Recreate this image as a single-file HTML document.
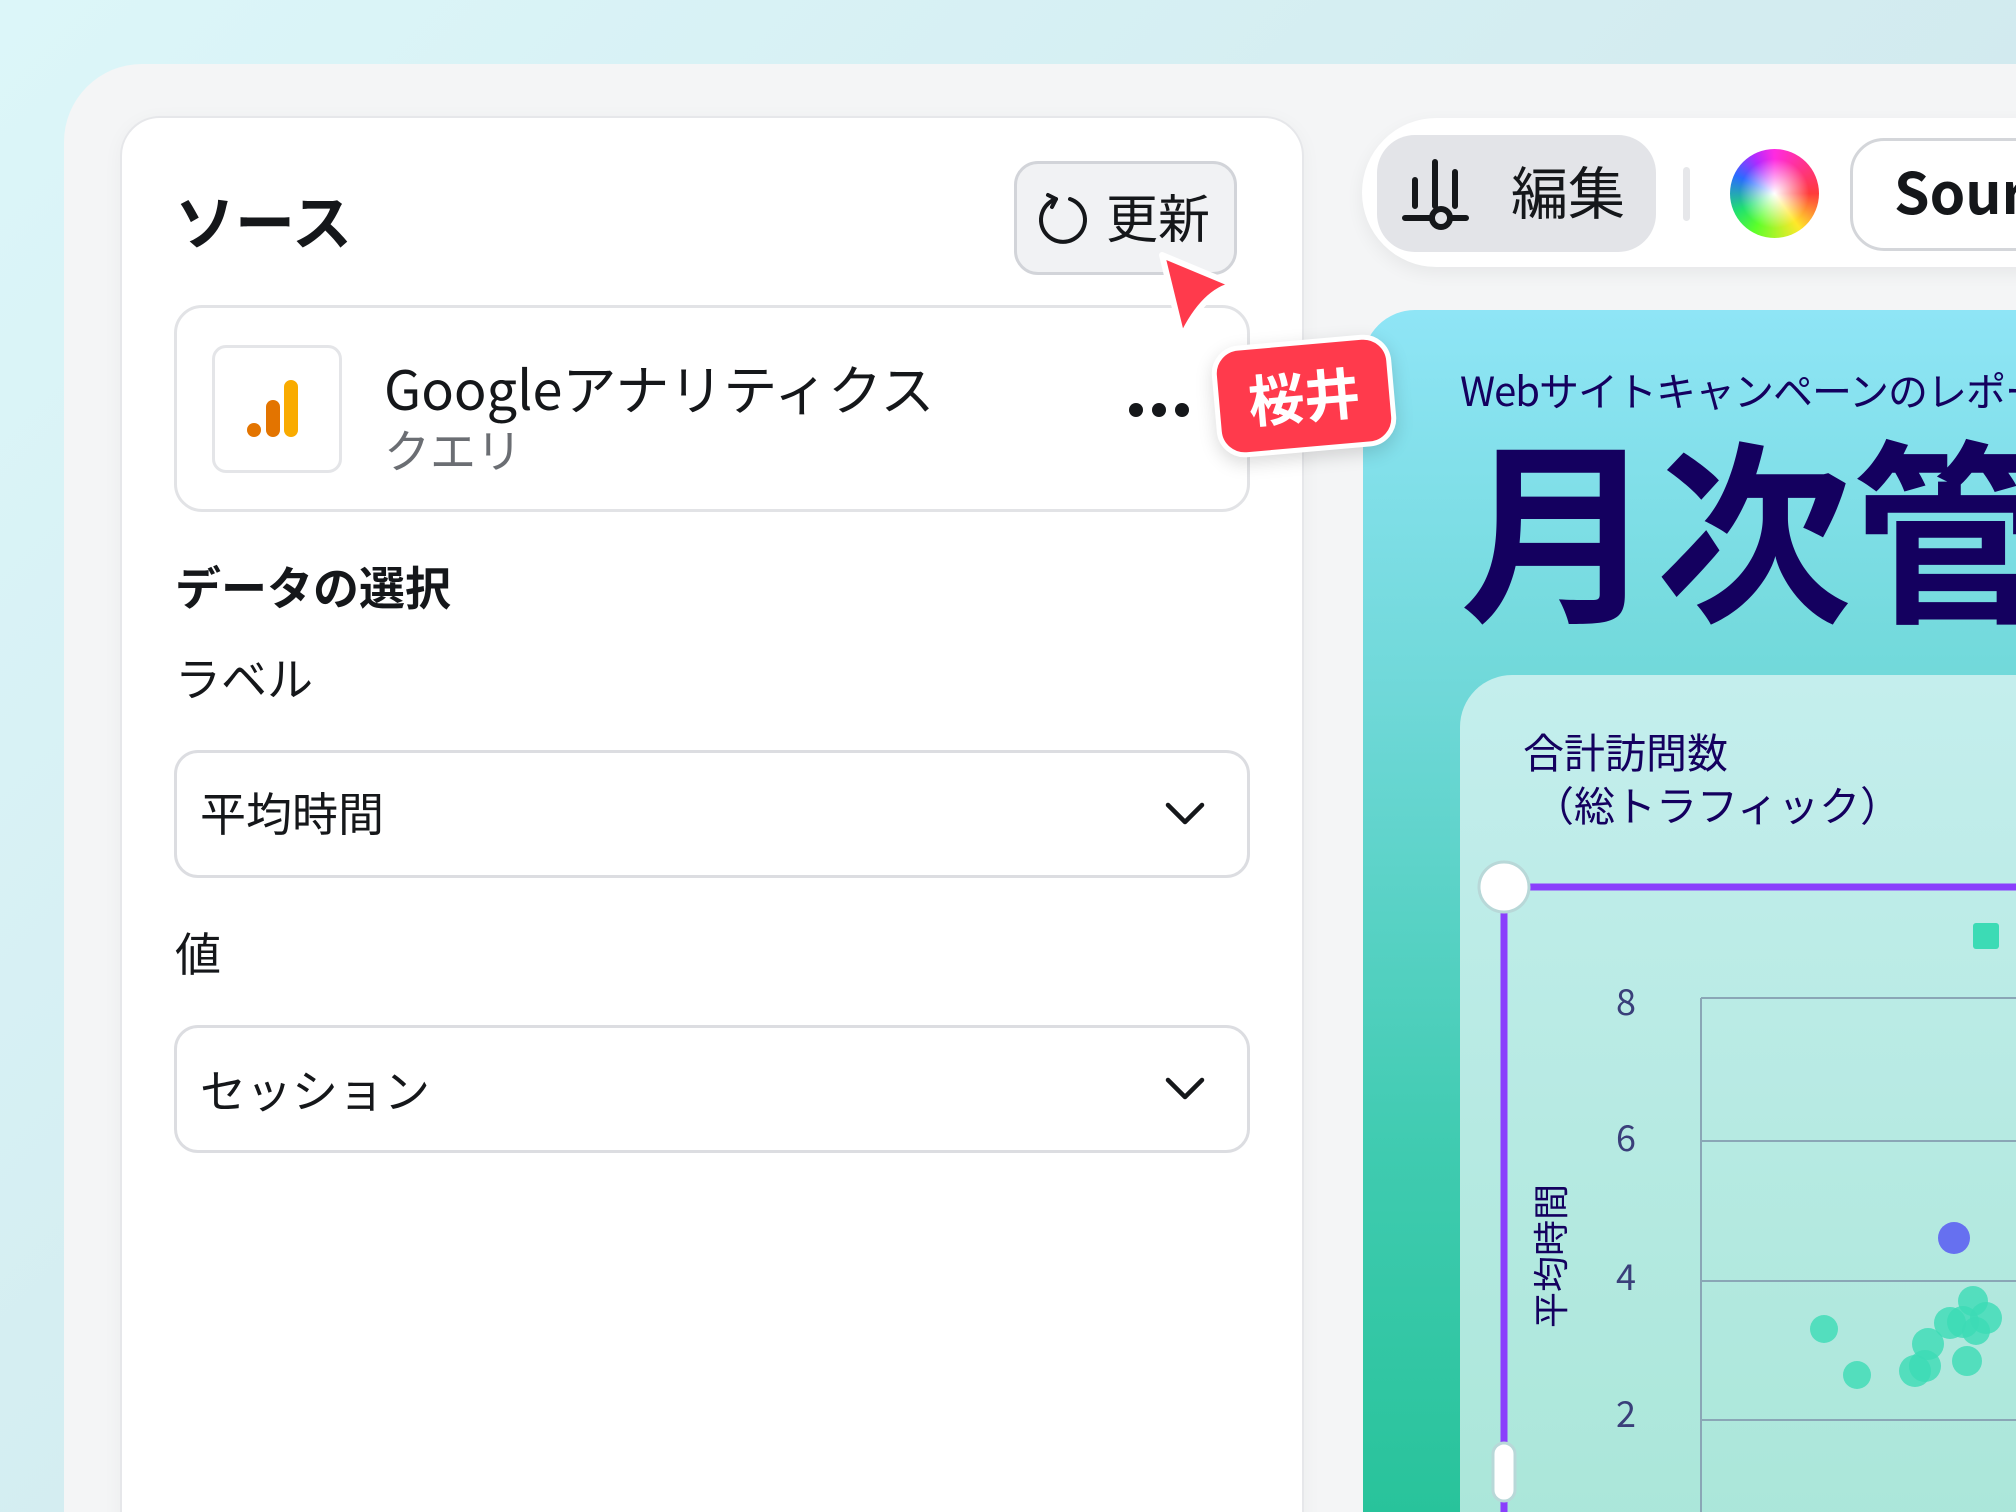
<!DOCTYPE html>
<html><head><meta charset="utf-8"><style>
*{box-sizing:border-box;margin:0;padding:0}
html,body{width:2016px;height:1512px;overflow:hidden}
#w{width:2016px;height:1512px;overflow:hidden;position:relative;background:linear-gradient(135deg,#dcf6f9 0%,#d3ecf0 50%,#cfe3ea 100%);font-family:"Noto Sans CJK JP","Liberation Sans",sans-serif;color:#15171a}
.abs{position:absolute}
.outer{left:64px;top:64px;width:2100px;height:1600px;border-radius:78px;background:#f4f5f6}
.panel{left:120px;top:116px;width:1184px;height:1500px;border-radius:40px;background:#fff;border:2px solid #e6e7ea;box-shadow:0 4px 20px rgba(0,0,0,.04)}
.t{position:absolute;white-space:nowrap;line-height:1}
.dd{position:absolute;left:174px;width:1076px;height:128px;border:3px solid #dcdde1;border-radius:24px;background:#fff}
</style></head><body><div id="w">
<div class="abs outer"></div>
<div class="abs panel"></div>
<div class="t" style="left:175px;top:190px;font-size:60px;font-weight:bold">ソース</div>
<div class="abs" style="left:1014px;top:161px;width:223px;height:114px;border-radius:24px;background:#f1f2f4;border:3px solid #d2d4d9"></div>
<svg class="abs" style="left:1036px;top:191px" width="56" height="56" viewBox="0 0 56 56"><path d="M20 8 A22 22 0 1 0 34 8" fill="none" stroke="#15171a" stroke-width="4" stroke-linecap="round"/><path d="M12 4 L20 8 L16 16" fill="none" stroke="#15171a" stroke-width="4" stroke-linecap="round" stroke-linejoin="round"/></svg>
<div class="t" style="left:1106px;top:190px;font-size:52px">更新</div>
<div class="abs" style="left:174px;top:305px;width:1076px;height:207px;border:3px solid #e2e3e6;border-radius:28px;background:#fff"></div>
<div class="abs" style="left:212px;top:345px;width:130px;height:128px;border:3px solid #e4e5e8;border-radius:14px;background:#fff"></div>
<svg class="abs" style="left:245px;top:378px" width="60" height="62"><circle cx="9" cy="52" r="7" fill="#e37400"/><rect x="21" y="22" width="14" height="37" rx="7" fill="#e37400"/><rect x="39" y="2" width="14" height="57" rx="7" fill="#f9ab00"/></svg>
<div class="t" style="left:384px;top:360px;font-size:54px">Googleアナリティクス</div>
<div class="t" style="left:384px;top:426px;font-size:46px;color:#6b6e73">クエリ</div>
<svg class="abs" style="left:1126px;top:400px" width="66" height="20"><circle cx="10" cy="10" r="7" fill="#15171a"/><circle cx="33" cy="10" r="7" fill="#15171a"/><circle cx="56" cy="10" r="7" fill="#15171a"/></svg>
<div class="t" style="left:175px;top:563px;font-size:46px;font-weight:bold">データの選択</div>
<div class="t" style="left:175px;top:654px;font-size:46px">ラベル</div>
<div class="dd" style="top:750px"></div>
<div class="t" style="left:200px;top:789px;font-size:46px">平均時間</div>
<svg class="abs" style="left:1164px;top:801px" width="42" height="26"><path d="M4 4 L21 21 L38 4" fill="none" stroke="#15171a" stroke-width="4.5" stroke-linecap="round" stroke-linejoin="round"/></svg>
<div class="t" style="left:175px;top:929px;font-size:46px">値</div>
<div class="dd" style="top:1025px"></div>
<div class="t" style="left:200px;top:1066px;font-size:46px">セッション</div>
<svg class="abs" style="left:1164px;top:1076px" width="42" height="26"><path d="M4 4 L21 21 L38 4" fill="none" stroke="#15171a" stroke-width="4.5" stroke-linecap="round" stroke-linejoin="round"/></svg>

<div class="abs" style="left:1362px;top:118px;width:800px;height:149px;border-radius:75px;background:#fff;box-shadow:0 6px 18px rgba(0,0,0,.06)"></div>
<div class="abs" style="left:1377px;top:135px;width:279px;height:117px;border-radius:38px;background:#e3e4e8"></div>
<svg class="abs" style="left:1380px;top:130px" width="120" height="120"><g stroke="#15171a" stroke-width="6" stroke-linecap="round" fill="none"><path d="M35 50V76M55 32V76M75 42V76M25 88H52M70 88H86"/><circle cx="61" cy="88" r="9"/></g></svg>
<div class="t" style="left:1511px;top:162px;font-size:57px">編集</div>
<div class="abs" style="left:1683px;top:167px;width:7px;height:54px;border-radius:4px;background:#e6e7ea"></div>
<div class="abs" style="left:1730px;top:149px;width:89px;height:89px;border-radius:50%;background:radial-gradient(circle at 50% 50%,#fff 0%,rgba(255,255,255,0) 55%),conic-gradient(from 0deg,#ff2be0,#ff3b3b 25%,#ffe82a 40%,#5cff2a 58%,#20e070 68%,#2a6bff 82%,#b02aff 92%,#ff2be0)"></div>
<div class="abs" style="left:1850px;top:138px;width:300px;height:113px;border-radius:34px;border:3px solid #d4d6da;background:#fff"></div>
<div class="t" style="left:1894px;top:162px;font-size:57px;font-weight:bold">Source</div>

<div class="abs" style="left:1363px;top:310px;width:800px;height:1300px;border-radius:52px;background:linear-gradient(180deg,#8fe5f6 0%,#6fd8d8 30%,#3fcbb0 65%,#22c195 100%)"></div>
<div class="t" style="left:1460px;top:369px;font-size:40px;color:#14005f;letter-spacing:-1px">Webサイトキャンペーンのレポート</div>
<div class="t" style="left:1460px;top:425px;font-size:196px;font-weight:bold;color:#14005f">月次管理</div>
<div class="abs" style="left:1460px;top:675px;width:700px;height:900px;border-radius:52px;background:linear-gradient(180deg,#c4eeed 0%,#a9e6d8 100%)"></div>
<div class="t" style="left:1523px;top:730px;font-size:41px;color:#14005f">合計訪問数</div>
<div class="t" style="left:1533px;top:783px;font-size:41px;color:#14005f">（総トラフィック）</div>
<svg class="abs" style="left:1460px;top:860px" width="556" height="652">
<g stroke="#8aa6b6" stroke-width="2"><path d="M241 138V652M241 138H556M241 281H556M241 421H556M241 560H556"/></g>
<g fill="#3a3f7a" font-family="Noto Sans CJK JP,Liberation Sans,sans-serif" font-size="36" text-anchor="middle"><text x="166" y="155">8</text><text x="166" y="291">6</text><text x="166" y="430">4</text><text x="166" y="567">2</text></g>
<rect x="513" y="63" width="26" height="26" rx="3" fill="#3cdbb5"/>
<g fill="#3cdbb5" fill-opacity=".8"><circle cx="364" cy="469" r="14"/><circle cx="397" cy="515" r="14"/><circle cx="455" cy="511" r="16"/><circle cx="468" cy="484" r="16"/><circle cx="465" cy="506" r="16"/><circle cx="507" cy="501" r="15"/><circle cx="503" cy="462" r="16"/><circle cx="513" cy="441" r="15"/><circle cx="526" cy="458" r="16"/><circle cx="516" cy="471" r="14"/><circle cx="490" cy="463" r="16"/></g>
<circle cx="494" cy="378" r="16" fill="#6670f0"/>
<path d="M44 27H556M44 27V652" stroke="#8a3ffc" stroke-width="7" fill="none"/>
<circle cx="44" cy="27" r="25" fill="#fff" stroke="#b8d8d8" stroke-width="3"/>
<rect x="33" y="583" width="22" height="58" rx="11" fill="#fff" stroke="#b8d8d8" stroke-width="3"/>
</svg>
<div class="t" style="left:1494px;top:1255px;font-size:36px;color:#14005f;transform:rotate(-90deg);transform-origin:center;width:110px;text-align:center;">平均時間</div>

<svg class="abs" style="left:1150px;top:245px" width="100" height="100"><path d="M12 10 L84 40 Q54 46 32 92 Z" fill="#ff3a4c" stroke="#fff" stroke-width="6" stroke-linejoin="round"/></svg>
<div class="abs" style="left:1214px;top:340px;width:180px;height:112px;border-radius:28px;background:#ff3a4c;border:5px solid #fff;transform:rotate(-5deg);box-shadow:0 6px 18px rgba(0,0,0,.15);color:#fff;font-size:56px;font-weight:bold;text-align:center;line-height:100px">桜井</div>
</div></body></html>
